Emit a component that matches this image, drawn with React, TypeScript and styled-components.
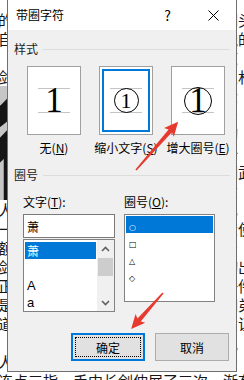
import React from 'react';
import styled, { createGlobalStyle } from 'styled-components';

const GlobalStyle = createGlobalStyle`
    html, body {
        margin: 0;
        padding: 0;
        background: #fff;
    }
    body {
        width: 244px;
        height: 380px;
        overflow: hidden;
    }
`;

const Page = styled.div`
    position: relative;
    width: 244px;
    height: 380px;
    overflow: hidden;
    background: #fff;
`;

// document text behind the dialog
const Doc = styled.div`
    width: 256px;
    margin-left: -2px;
    padding-top: 10px;
    font-family: 'Noto Sans CJK SC', sans-serif;
    font-size: 15px;
    line-height: 19px;
    color: #161616;
`;

const DocLine = styled.div`
    height: 19px;
    white-space: nowrap;
    overflow: hidden;
`;

const PictureRow = styled.div`
    display: flex;
    height: 114px;
`;

const Picture = styled.div`
    width: 75px;
    height: 114px;
    flex-shrink: 0;
    background: #c6c6c6;
    overflow: hidden;
    display: flex;
    align-items: center;
    font-family: 'Noto Sans CJK SC', sans-serif;
    font-size: 120px;
    font-weight: 900;
    line-height: 1;
    color: #151515;
    text-indent: -12px;
`;

const PictureText = styled.div`
    flex: 1;
    min-width: 0;
`;

const Dialog = styled.div`
    position: absolute;
    left: 7px;
    top: 0;
    width: 230px;
    height: 372px;
    box-sizing: border-box;
    border: 1px solid #6f6f6f;
    border-top: none;
    background: #f0f0f0;
    display: flex;
    flex-direction: column;
    font-family: 'Noto Sans CJK SC', sans-serif;
    font-size: 12px;
    color: #000;
`;

const TitleBar = styled.div`
    height: 30px;
    flex-shrink: 0;
    background: #fff;
    display: flex;
    align-items: center;
`;

const Title = styled.div`
    flex: 1;
    padding-left: 8px;
    line-height: 16px;
`;

const TitleButton = styled.div`
    width: ${(p: { $w: number }) => p.$w}px;
    height: 30px;
    display: flex;
    align-items: center;
    justify-content: center;
    font-size: 14px;
`;

const Body = styled.div`
    flex: 1;
    display: flex;
    flex-direction: column;
    padding: 11px 6px 10px 6px;
`;

const SectionHeader = styled.div`
    display: flex;
    align-items: center;
    gap: 5px;
    height: 16px;
    line-height: 16px;
    margin-top: ${(p: { $top?: number }) => p.$top || 0}px;
    color: #1b1b1b;
`;

const Rule = styled.div`
    flex: 1;
    height: 1px;
    background: #dcdcdc;
`;

const Options = styled.div`
    display: flex;
    gap: 18px;
    margin-top: 9px;
    padding-left: 13px;
`;

const Option = styled.div`
    width: 54px;
    display: flex;
    flex-direction: column;
    align-items: center;
    gap: 5px;
`;

const PreviewBox = styled.div`
    width: 54px;
    height: 69px;
    box-sizing: border-box;
    border: 1px solid #a0a0a0;
    background: #fff;
    display: flex;
    align-items: center;
    justify-content: center;
    box-shadow: ${(p: { $selected?: boolean }) =>
        p.$selected ? 'inset 0 0 0 2px #fff, inset 0 0 0 4px #0078d7' : 'none'};
`;

const GuideFrame = styled.div`
    width: 32px;
    height: 25px;
    box-sizing: border-box;
    border-top: 1px solid #c4c4c4;
    border-bottom: 1px solid #c4c4c4;
    display: flex;
    align-items: center;
    justify-content: center;
`;

const Digit = styled.span`
    font-family: 'Liberation Serif', serif;
    font-size: ${(p: { $size: number; $lh: number }) => p.$size}px;
    line-height: ${(p: { $size: number; $lh: number }) => p.$lh}px;
`;

const Ring = styled.div`
    width: ${(p: { $d: number }) => p.$d}px;
    height: ${(p: { $d: number }) => p.$d}px;
    flex-shrink: 0;
    box-sizing: border-box;
    border: 1px solid #000;
    border-radius: 50%;
    display: flex;
    align-items: center;
    justify-content: center;
`;

const OptionLabel = styled.div`
    white-space: nowrap;
    line-height: 16px;
`;

const Fields = styled.div`
    display: flex;
    gap: 9px;
    margin-top: 11px;
    padding-left: 9px;
`;

const Field = styled.div`
    width: ${(p: { $w: number }) => p.$w}px;
    display: flex;
    flex-direction: column;
`;

const FieldLabel = styled.div`
    line-height: 16px;
    margin-bottom: 4px;
`;

const TextBox = styled.div`
    height: 24px;
    box-sizing: border-box;
    border: 1px solid #7a7a7a;
    background: #fff;
    padding-left: 3px;
    display: flex;
    align-items: center;
`;

const ListBox = styled.div`
    height: ${(p: { $h: number; $gap?: number }) => p.$h}px;
    margin-top: ${(p) => p.$gap || 0}px;
    box-sizing: border-box;
    border: 1px solid #828282;
    background: #fff;
    display: flex;
`;

const ListItems = styled.div`
    flex: 1;
    display: flex;
    flex-direction: column;
    padding: ${(p: { $pad: string }) => p.$pad};
`;

const ListItem = styled.div`
    height: 17px;
    flex-shrink: 0;
    line-height: 17px;
    padding-left: ${(p: { $selected?: boolean; $indent: number }) => p.$indent}px;
    background: ${(p) => (p.$selected ? '#0078d7' : 'transparent')};
    color: ${(p) => (p.$selected ? '#fff' : '#000')};
`;

const Shape = styled.span`
    font-family: 'DejaVu Sans', sans-serif;
    font-size: 8px;
`;

const Latin = styled.span`
    font-family: 'Liberation Sans', sans-serif;
    font-size: 13px;
`;

const ScrollBar = styled.div`
    width: 17px;
    background: #f0f0f0;
    display: flex;
    flex-direction: column;
`;

const ScrollArrow = styled.div`
    height: 17px;
    display: flex;
    align-items: center;
    justify-content: center;
`;

const Thumb = styled.div`
    height: 18px;
    margin: 1px 1px 0 1px;
    background: #cdcdcd;
`;

const Track = styled.div`
    flex: 1;
`;

const Buttons = styled.div`
    display: flex;
    justify-content: flex-end;
    gap: 10px;
    margin-top: 21px;
    padding-right: 1px;
`;

const Button = styled.div`
    width: 74px;
    height: 28px;
    box-sizing: border-box;
    display: flex;
    align-items: center;
    justify-content: center;
    background: #e1e1e1;
    border: ${(p: { $primary?: boolean }) => (p.$primary ? '2px solid #0078d7' : '1px solid #adadad')};
    outline: ${(p) => (p.$primary ? '1px dotted #000' : 'none')};
    outline-offset: -5px;
`;

const Overlay = styled.svg`
    position: absolute;
    left: 0;
    top: 0;
    pointer-events: none;
`;

const FILLER =
    '只见那人身形一晃已到了院中长剑出鞘寒光闪闪众人齐声喝彩他却不以为意转身便走师父说道此乃本门绝学切不可轻易示人';

const filler = (i: number, n: number) => {
    const s = FILLER.repeat(4);
    const start = (i * 13) % FILLER.length;
    return s.slice(start, start + n);
};

const topLines: [string, string][] = [
    ['的', '头'],
    ['自', '的'],
    ['　', '　'],
    ['剑', '林'],
];

const pictureRight = ['　', '　', '　', '　', '武', '　'];

const lowerLines: [string, string][] = [
    ['人', '　'],
    ['一', '使'],
    ['额', '　'],
    ['剑', '出'],
    ['正', '件'],
    ['是', '弟'],
    ['道', '证'],
    ['　', '　'],
    ['人', '　'],
];

const Arrow = ({ x, y, angle, len }: { x: number; y: number; angle: number; len: number }) => (
    <polygon
        transform={`translate(${x} ${y}) rotate(${angle})`}
        points={`0,-0.8 ${len - 12},-2.2 ${len - 14},-6.5 ${len},0 ${len - 14},6.5 ${len - 12},2.2 0,0.8`}
        fill='#e63a2e'
    />
);

const Chevron = ({ up }: { up?: boolean }) => (
    <svg width='9' height='6' viewBox='0 0 9 6'>
        <polyline
            points={up ? '1,5 4.5,1.5 8,5' : '1,1 4.5,4.5 8,1'}
            fill='none'
            stroke='#606060'
            strokeWidth='1.6'
        />
    </svg>
);

const App = () => {
    return (
        <Page>
            <GlobalStyle />
            <Doc>
                {topLines.map(([l, r], i) => (
                    <DocLine key={`t${i}`}>
                        {l}
                        {filler(i, 15)}
                        {r}
                    </DocLine>
                ))}
                <PictureRow>
                    <Picture>得</Picture>
                    <PictureText>
                        {pictureRight.map((r, i) => (
                            <DocLine key={`p${i}`}>
                                {filler(i + 5, 11)}
                                {r}
                            </DocLine>
                        ))}
                    </PictureText>
                </PictureRow>
                {lowerLines.map(([l, r], i) => (
                    <DocLine key={`l${i}`}>
                        {l}
                        {filler(i + 12, 15)}
                        {r}
                    </DocLine>
                ))}
                <DocLine>连点三指，手中长剑伸展了三次，渐有回旋</DocLine>
            </Doc>

            <Dialog>
                <TitleBar>
                    <Title>带圈字符</Title>
                    <TitleButton $w={45}>?</TitleButton>
                    <TitleButton $w={46}>
                        <svg width='11' height='11' viewBox='0 0 11 11'>
                            <path d='M0.5 0.5 L10.5 10.5 M10.5 0.5 L0.5 10.5' stroke='#000' strokeWidth='1' />
                        </svg>
                    </TitleButton>
                </TitleBar>
                <Body>
                    <SectionHeader>
                        样式
                        <Rule />
                    </SectionHeader>
                    <Options>
                        <Option>
                            <PreviewBox>
                                <GuideFrame>
                                    <Digit $size={35} $lh={23}>1</Digit>
                                </GuideFrame>
                            </PreviewBox>
                            <OptionLabel>
                                无(<u>N</u>)
                            </OptionLabel>
                        </Option>
                        <Option>
                            <PreviewBox $selected>
                                <GuideFrame>
                                    <Ring $d={25}>
                                        <Digit $size={22} $lh={22}>1</Digit>
                                    </Ring>
                                </GuideFrame>
                            </PreviewBox>
                            <OptionLabel>
                                缩小文字(<u>S</u>)
                            </OptionLabel>
                        </Option>
                        <Option>
                            <PreviewBox>
                                <GuideFrame>
                                    <Ring $d={28}>
                                        <Digit $size={35} $lh={23}>1</Digit>
                                    </Ring>
                                </GuideFrame>
                            </PreviewBox>
                            <OptionLabel>
                                增大圈号(<u>E</u>)
                            </OptionLabel>
                        </Option>
                    </Options>

                    <SectionHeader $top={11}>
                        圈号
                        <Rule />
                    </SectionHeader>
                    <Fields>
                        <Field $w={92}>
                            <FieldLabel>
                                文字(<u>T</u>):
                            </FieldLabel>
                            <TextBox>萧</TextBox>
                            <ListBox $h={73} $gap={1}>
                                <ListItems $pad='2px 1px'>
                                    <ListItem $indent={2} $selected>
                                        萧
                                    </ListItem>
                                    <ListItem $indent={2} />
                                    <ListItem $indent={2}>
                                        <Latin>A</Latin>
                                    </ListItem>
                                    <ListItem $indent={2}>
                                        <Latin>a</Latin>
                                    </ListItem>
                                </ListItems>
                                <ScrollBar>
                                    <ScrollArrow>
                                        <Chevron up />
                                    </ScrollArrow>
                                    <Thumb />
                                    <Track />
                                    <ScrollArrow>
                                        <Chevron />
                                    </ScrollArrow>
                                </ScrollBar>
                            </ListBox>
                        </Field>
                        <Field $w={91}>
                            <FieldLabel>
                                圈号(<u>O</u>):
                            </FieldLabel>
                            <ListBox $h={88}>
                                <ListItems $pad='1px'>
                                    <ListItem $indent={3} $selected>
                                        <Shape>○</Shape>
                                    </ListItem>
                                    <ListItem $indent={3}>
                                        <Shape>□</Shape>
                                    </ListItem>
                                    <ListItem $indent={3}>
                                        <Shape>△</Shape>
                                    </ListItem>
                                    <ListItem $indent={3}>
                                        <Shape>◇</Shape>
                                    </ListItem>
                                </ListItems>
                            </ListBox>
                        </Field>
                    </Fields>

                    <Buttons>
                        <Button $primary>确定</Button>
                        <Button>取消</Button>
                    </Buttons>
                </Body>
            </Dialog>

            <Overlay width='244' height='380' viewBox='0 0 244 380'>
                <Arrow x={136} y={170} angle={-48.8} len={64} />
                <Arrow x={163} y={293} angle={131.6} len={48} />
            </Overlay>
        </Page>
    );
};

export default App;
